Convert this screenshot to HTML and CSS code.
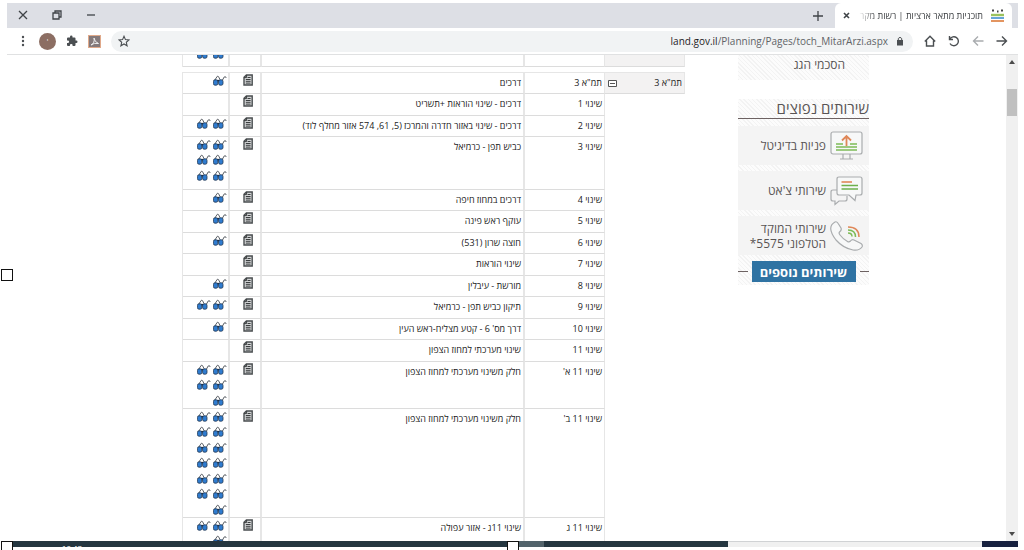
FILE: index.html
```html
<!DOCTYPE html>
<html lang="he">
<head>
<meta charset="utf-8">
<title>תוכניות מתאר ארציות | רשות מקרקעי ישראל</title>
<link rel="stylesheet" href="styles.css">
</head>
<body>
<svg class="symbols" aria-hidden="true">
  <symbol id="g" viewBox="0 0 14 11">
    <path d="M1.2 6 L4.2 1.4 Q5 .6 5.6 1.8 L7 4.500 M7.500 6 L9.5 5 L11.2 2 Q12.6 .8 13.2 3" fill="none" stroke="#5b6066" stroke-width="1"/>
    <path d="M4 5.8H6.4" stroke="#18273a" stroke-width="1.8"/>
    <rect x=".4" y="4.8" width="4.4" height="5.4" rx="1.6" fill="#2f7cd0" stroke="#22364f" stroke-width=".8"/>
    <rect x="5.6" y="4.8" width="4.4" height="5.4" rx="1.6" fill="#2f7cd0" stroke="#22364f" stroke-width=".8"/>
  </symbol>
  <symbol id="d" viewBox="0 0 10 12">
    <path d="M3.4 1H9.2V11H1V3.4Z" fill="#d3d5d6" stroke="#4a4e50" stroke-width="1.4"/>
    <path d="M1 3.6H3.6V1M4.6 3.5H7.6M2.8 5.5H7.6M2.8 7.3H7.6M2.8 9.1H7.6" fill="none" stroke="#3c3f40" stroke-width="1"/>
  </symbol>
</svg>
<div class="window">
  <header class="tabbar">
    <div class="controls">
      <button aria-label="סגור"><svg width="10" height="10" viewBox="0 0 10 10"><path d="M1 1 9 9M9 1 1 9"/></svg></button>
      <button aria-label="שחזר"><svg width="10" height="10" viewBox="0 0 10 10"><path d="M1 3H7V9H1ZM3 3V1H9V7H7"/></svg></button>
      <button aria-label="מזער"><svg width="10" height="10" viewBox="0 0 10 10"><path d="M1 5H9"/></svg></button>
    </div>
    <button class="newtab" aria-label="כרטיסייה חדשה"><svg width="10" height="10" viewBox="0 0 10 10"><path d="M5 0V10M0 5H10"/></svg></button>
    <div class="tab">
      <button aria-label="סגור כרטיסייה"><svg width="7" height="7" viewBox="0 0 7 7"><path d="M1 1 6 6M6 1 1 6"/></svg></button>
      <span class="tabtitle" dir="rtl">תוכניות מתאר ארציות | רשות מקר</span>
      <svg width="13" height="13" viewBox="0 0 13 13"><path d="M1 1.5H3M6 2.5H7.5M10 1.5H12" stroke="#444" stroke-width="2"/><path d="M0 6H13" stroke="#9bc25e" stroke-width="2.4"/><path d="M0 9H13" stroke="#3f8fd0" stroke-width="1.6"/><path d="M0 12H13" stroke="#e08a50" stroke-width="1.8"/></svg>
    </div>
  </header>
  <nav class="toolbar">
    <button aria-label="תפריט"><svg width="12" height="12" viewBox="0 0 12 12" fill="#4b4f52"><circle cx="6" cy="2" r="1.2"/><circle cx="6" cy="6" r="1.2"/><circle cx="6" cy="10" r="1.2"/></svg></button>
    <button class="avatar" aria-label="פרופיל">י</button>
    <button aria-label="תוספים"><svg width="12" height="12" viewBox="0 0 24 24" fill="#4b4f52"><path d="M20.5 11H19V7a2 2 0 0 0-2-2h-4V3.500a2.500 2.500 0 0 0-5 0V5H4a2 2 0 0 0-2 2v3.800h1.500a2.700 2.700 0 0 1 0 5.400H2V20a2 2 0 0 0 2 2h3.800v-1.500a2.700 2.700 0 0 1 5.400 0V22H17a2 2 0 0 0 2-2v-4h1.500a2.500 2.500 0 0 0 0-5z"/></svg></button>
    <button aria-label="PDF"><svg width="13" height="13" viewBox="0 0 13 13"><rect x=".5" y=".5" width="12" height="12" fill="#84797a" stroke="#e0a98a"/><path d="M3 10Q7 8 6 3Q6.500 7 10.500 8.500Q6 7.500 3 10" fill="none" stroke="#eee"/></svg></button>
    <div class="address">
      <button aria-label="סימנייה"><svg width="12" height="12" viewBox="0 0 24 24"><path d="M12 2.500 14.900 9.200 22 9.900 16.600 14.600 18.200 21.600 12 17.900 5.800 21.600 7.400 14.600 2 9.900 9.100 9.200Z" fill="none" stroke="#4b4f52" stroke-width="2.200"/></svg></button>
      <span class="url"><b>land.gov.il</b>/Planning/Pages/toch_MitarArzi.aspx</span>
      <svg width="8" height="10" viewBox="0 0 8 10"><rect x="1" y="4" width="6" height="5.500" fill="#4b4f52"/><path d="M2.300 4V2.500Q4 0 5.700 2.500V4" fill="none" stroke="#4b4f52"/></svg>
    </div>
    <div class="nav">
      <button aria-label="דף הבית"><svg width="12" height="12" viewBox="0 0 12 12"><path d="M.8 6.500 6 1.200 11.200 6.500M2.500 5.500V11H9.500V5.500"/></svg></button>
      <button aria-label="רענן"><svg width="12" height="12" viewBox="0 0 12 12"><path d="M1.500 1V4.500H5M1.800 4.300A4.500 4.500 0 1 1 2 8.500"/></svg></button>
      <button class="off" aria-label="קדימה"><svg width="12" height="12" viewBox="0 0 12 12"><path d="M11.500 6H1.500M6 1.500 1.500 6 6 10.500"/></svg></button>
      <button aria-label="אחורה"><svg width="12" height="12" viewBox="0 0 12 12"><path d="M.5 6H10.500M6 1.500 10.500 6 6 10.500"/></svg></button>
    </div>
  </nav>
  <div class="viewport">
    <main class="page" dir="rtl">
      <aside class="side">
        <a class="top hatch" href="#">הסכמי הגג</a>
        <section class="hatch">
          <h2>שירותים נפוצים</h2>
          <a class="service" href="#"><svg width="34" height="30" viewBox="0 0 34 30" fill="none" stroke="#a9acae" stroke-width="1.200"><rect x="1" y="1" width="31" height="22" rx="2" fill="#f7f8f8"/><path d="M13 23V28M20 23V28M10 28H23"/><path d="M6 13H13M20 13H27M6 16H27M6 19H27" stroke="#7ebb57" stroke-width="1.500"/><path d="M16.500 15V5.500M12 9.500 16.500 5 21 9.500" stroke="#df8758" stroke-width="1.800"/></svg><span>פניות בדיגיטל</span></a>
          <a class="service" href="#"><svg width="34" height="30" viewBox="0 0 34 30" fill="none" stroke="#a9acae" stroke-width="1.200"><path d="M7 14H3Q1 14 1 16V23Q1 25 3 25H5V28.500L9 25H15Q17 25 17 23V20"/><path d="M9 1H30Q32 1 32 3V17Q32 19 30 19H26L25 24.500 19 19H9Q7 19 7 17V3Q7 1 9 1Z" fill="#f7f8f8"/><path d="M11.500 6H22" stroke="#df8758" stroke-width="1.600"/><path d="M11.500 9.500H28M11.500 13H28" stroke="#6eb04c" stroke-width="1.600"/></svg><span>שירותי צ'אט</span></a>
          <a class="service" href="#"><svg width="34" height="30" viewBox="0 0 34 30" fill="none" stroke="#a9acae" stroke-width="1.200"><path d="M5 1Q7 0 8.500 3L11 7Q12 9 9.500 11Q8.500 12 10 14Q13 18 17.500 20.500Q19 21.500 20.500 20Q22 18 24 19L31 22.500Q33 24 32 26Q29 30 23 29Q13 27 6 19Q-4 6 5 1Z" fill="#f7f8f8"/><path d="M18 12Q22 12 22 15.500M18 9Q25.500 9 25.500 16" stroke="#7ebb57" stroke-width="1.500"/><path d="M18 6Q29 6 29 16" stroke="#df8758" stroke-width="1.500"/></svg><span>שירותי המוקד הטלפוני 5575*</span></a>
          <div class="more"><button>שירותים נוספים</button></div>
        </section>
      </aside>
      <div class="tables">
        <table class="prev">
          <colgroup><col class="c1"><col class="c2"><col><col class="c4"><col class="c5"></colgroup>
          <tr><td class="group"></td><td></td><td></td><td></td><td><div class="gl"><svg><use href="#g"/></svg><svg><use href="#g"/></svg></div></td></tr>
        </table>
        <table>
          <colgroup><col class="c1"><col class="c2"><col><col class="c4"><col class="c5"></colgroup>
          <tr><td class="group"><div class="ghead"><span>תמ"א 3</span><button aria-label="כווץ"><svg width="9" height="9" viewBox="0 0 9 9"><path d="M.5 1.500H8.500V7.500H.5ZM2 4.500H7" fill="#fff" stroke="#555"/></svg></button></div></td><td>תמ"א 3</td><td>דרכים</td><td><svg class="doc"><use href="#d"/></svg></td><td><div class="gl"><svg><use href="#g"/></svg></div></td></tr>
          <tr><td class="none"></td><td>שינוי 1</td><td>דרכים - שינוי הוראות +תשריט</td><td><svg class="doc"><use href="#d"/></svg></td><td></td></tr>
          <tr><td class="none"></td><td>שינוי 2</td><td>דרכים - שינוי באזור חדרה והמרכז (5, 61, 574 אזור מחלף לוד)</td><td><svg class="doc"><use href="#d"/></svg></td><td><div class="gl"><svg><use href="#g"/></svg><svg><use href="#g"/></svg></div></td></tr>
          <tr class="tall"><td class="none"></td><td>שינוי 3</td><td>כביש תפן - כרמיאל</td><td><svg class="doc"><use href="#d"/></svg></td><td><div class="gl"><svg><use href="#g"/></svg><svg><use href="#g"/></svg><svg><use href="#g"/></svg><svg><use href="#g"/></svg><svg><use href="#g"/></svg><svg><use href="#g"/></svg></div></td></tr>
          <tr><td class="none"></td><td>שינוי 4</td><td>דרכים במחוז חיפה</td><td><svg class="doc"><use href="#d"/></svg></td><td><div class="gl"><svg><use href="#g"/></svg></div></td></tr>
          <tr><td class="none"></td><td>שינוי 5</td><td>עוקף ראש פינה</td><td><svg class="doc"><use href="#d"/></svg></td><td><div class="gl"><svg><use href="#g"/></svg></div></td></tr>
          <tr><td class="none"></td><td>שינוי 6</td><td>חוצה שרון (531)</td><td><svg class="doc"><use href="#d"/></svg></td><td><div class="gl"><svg><use href="#g"/></svg></div></td></tr>
          <tr><td class="none"></td><td>שינוי 7</td><td>שינוי הוראות</td><td><svg class="doc"><use href="#d"/></svg></td><td></td></tr>
          <tr><td class="none"></td><td>שינוי 8</td><td>מורשת - עיבלין</td><td><svg class="doc"><use href="#d"/></svg></td><td><div class="gl"><svg><use href="#g"/></svg></div></td></tr>
          <tr><td class="none"></td><td>שינוי 9</td><td>תיקון כביש תפן - כרמיאל</td><td><svg class="doc"><use href="#d"/></svg></td><td><div class="gl"><svg><use href="#g"/></svg><svg><use href="#g"/></svg></div></td></tr>
          <tr><td class="none"></td><td>שינוי 10</td><td>דרך מס' 6 - קטע מצליח-ראש העין</td><td><svg class="doc"><use href="#d"/></svg></td><td><div class="gl"><svg><use href="#g"/></svg></div></td></tr>
          <tr><td class="none"></td><td>שינוי 11</td><td>שינוי מערכתי למחוז הצפון</td><td><svg class="doc"><use href="#d"/></svg></td><td></td></tr>
          <tr><td class="none"></td><td>שינוי 11 א'</td><td>חלק משינוי מערכתי למחוז הצפון</td><td><svg class="doc"><use href="#d"/></svg></td><td><div class="gl"><svg><use href="#g"/></svg><svg><use href="#g"/></svg><svg><use href="#g"/></svg><svg><use href="#g"/></svg><svg><use href="#g"/></svg></div></td></tr>
          <tr><td class="none"></td><td>שינוי 11 ב'</td><td>חלק משינוי מערכתי למחוז הצפון</td><td><svg class="doc"><use href="#d"/></svg></td><td><div class="gl"><svg><use href="#g"/></svg><svg><use href="#g"/></svg><svg><use href="#g"/></svg><svg><use href="#g"/></svg><svg><use href="#g"/></svg><svg><use href="#g"/></svg><svg><use href="#g"/></svg><svg><use href="#g"/></svg><svg><use href="#g"/></svg><svg><use href="#g"/></svg><svg><use href="#g"/></svg><svg><use href="#g"/></svg><svg><use href="#g"/></svg></div></td></tr>
          <tr><td class="none"></td><td>שינוי 11 ג</td><td>שינוי 11ג - אזור עפולה</td><td><svg class="doc"><use href="#d"/></svg></td><td><div class="gl"><svg><use href="#g"/></svg><svg><use href="#g"/></svg><svg><use href="#g"/></svg></div></td></tr>
        </table>
      </div>
    </main>
    <div class="scroll"><svg width="6" height="4" viewBox="0 0 6 4"><path d="M0 4 3 0 6 4Z"/></svg><div class="thumb"></div><svg width="6" height="4" viewBox="0 0 6 4"><path d="M0 0 3 4 6 0Z"/></svg></div>
  </div>
  <footer class="taskbar"><span class="clock">10:42</span><i class="active"></i><i class="dark"></i><i class="search"></i><i class="start"></i></footer>
</div>
<i class="handle left mid"></i><i class="handle left low"></i><i class="handle center low"></i>
</body>
</html>
```
FILE: styles.css
```css
* { box-sizing: border-box; }
body { margin: 0; background: #fff; font-family: "Liberation Sans", sans-serif; overflow: hidden; position: relative; }
button { border: 0; padding: 0; margin: 0; background: none; font: inherit; color: inherit; display: flex; align-items: center; justify-content: center; }
svg { flex: none; display: block; }
.symbols { position: absolute; width: 0; height: 0; }
.window { height: 100vh; padding: 3px 6px 3px 7px; display: flex; flex-direction: column; }

.tabbar { height: 25px; flex: none; background: #dddfe5; display: flex; align-items: center; padding-right: 6px; }
.tabbar button svg { fill: none; stroke: #3f4347; stroke-width: 1.3; }
.controls { display: flex; gap: 24px; padding: 0 0 2px 11px; flex: 1; }
.newtab { margin-right: 12px; }
.newtab svg { stroke-width: 2; }
.tab { width: 177px; height: 25px; background: #fff; border-radius: 6px 6px 0 0; display: flex; align-items: center; gap: 8px; padding: 0 8px; }
.tab button svg { stroke-width: 1.6; }
.tabtitle { flex: 1; overflow: hidden; white-space: nowrap; font-family: "Open Sans", sans-serif; font-size: 9px; color: #3a3d40; mask-image: linear-gradient(to right, transparent, #000 18px); }

.toolbar { height: 27px; flex: none; display: flex; align-items: center; padding: 0 10px; border-bottom: 1px solid #e0e1e2; }
.toolbar > button { margin-right: 10px; }
.toolbar .avatar { width: 17px; height: 17px; border-radius: 50%; background: #8c6e63; color: #fff; font-size: 6px; }
.address { flex: 1; height: 21px; border-radius: 11px; background: #f1f3f4; display: flex; align-items: center; gap: 8px; padding: 0 9px 0 7px; }
.url { flex: 1; text-align: right; font-family: "Open Sans", sans-serif; font-size: 10px; color: #5f6367; white-space: nowrap; }
.url b { font-weight: 400; color: #1f2225; }
.nav { display: flex; gap: 12px; padding-left: 11px; }
.nav svg { fill: none; stroke: #4b4f52; stroke-width: 1.4; }
.nav .off svg { stroke: #a9acaf; }

.viewport { flex: 1; min-height: 0; display: flex; overflow: hidden; }
.page { flex: 1; display: flex; gap: 53px; padding: 0 137px 0 175px; overflow: hidden; }
.side { width: 131px; flex: none; color: #595555; font-family: "Open Sans", sans-serif; font-size: 12px; }
.side a { color: inherit; text-decoration: none; }
.hatch { background: repeating-linear-gradient(45deg, #f3f3f3 0 1px, #fcfcfc 1px 3px); }
.top { display: block; height: 25px; line-height: 20px; padding-right: 24px; margin-bottom: 19px; }
.side section { display: flex; flex-direction: column; gap: 6px; padding-bottom: 3px; }
.side h2 { margin: 0 0 1px; font-size: 15px; font-weight: 400; line-height: 19px; border-bottom: 1px solid #6d6262; }
.service { height: 39px; background: #f4f4f4; display: flex; align-items: center; gap: 4px; padding-right: 5px; line-height: 15px; }
.more { display: flex; align-items: center; gap: 4px; }
.more::before, .more::after { content: ""; flex: 1; height: 1px; background: #6d6262; }
.more button { height: 21px; width: 104px; background: #2f73a3; color: #fff; font-size: 13px; font-weight: 700; white-space: nowrap; }

.tables { flex: 1; height: 486px; overflow: hidden; }
table { width: 100%; table-layout: fixed; border-collapse: separate; border-spacing: 0; font-family: "Open Sans", sans-serif; font-size: 9px; line-height: 12px; color: #222; border-left: 1px solid #e6e6e6; }
td { height: 21px; padding: 4px 2px 0 3px; border-bottom: 1px solid #dcdcdc; border-right: 2px solid #e6e6e6; vertical-align: top; white-space: nowrap; }
tr:nth-child(even) td { height: 22px; }
tr.tall td { height: 53px; }
table + table { border-top: 1px solid #e6e6e6; }
.c1, .c2 { width: 80px; }
.c4 { width: 32px; }
.c5 { width: 47px; }
.prev { margin: -9px 0 5px; }
td.group { background: #f3f2f2; border-right-width: 1px; }
td.none { border-color: transparent; }
td:nth-child(2) { border-right-width: 1px; }
td:nth-child(n+4) { padding-top: 1px; }
.ghead { display: flex; justify-content: space-between; align-items: center; }
.doc { width: 10px; height: 12px; margin-right: 5px; }
.gl { display: grid; grid-template-columns: 14px 14px; grid-auto-rows: 15px 16px; column-gap: 2px; padding-top: 1px; margin: 0 -1px -2px 0; }
.gl svg { width: 14px; height: 11px; }

.scroll { width: 12px; flex: none; background: #f0f0f0; display: flex; flex-direction: column; align-items: center; padding: 5px 0; }
.scroll svg { fill: #4b4b4b; }
.thumb { width: 10px; height: 27px; background: #c0c0c0; margin: 25px 0 auto; }

.taskbar { height: 6px; flex: none; overflow: hidden; display: flex; background: #243640; }
.clock { width: 511px; flex: none; padding: 4px 0 0 55px; font-size: 8px; line-height: 8px; color: #fff; }
.active { width: 26px; background: #52636b; }
.dark { width: 184px; }
.search { flex: 1; background: #f0f0f0; border-top: 1px solid #d0d2d4; }
.start { width: 36px; background: #17213f; }
.handle { position: absolute; width: 12px; height: 12px; background: #fff; border: 1px solid #111; }
.left { left: 1px; }
.center { left: 507px; }
.mid { top: 269px; }
.low { top: 541px; }
```
